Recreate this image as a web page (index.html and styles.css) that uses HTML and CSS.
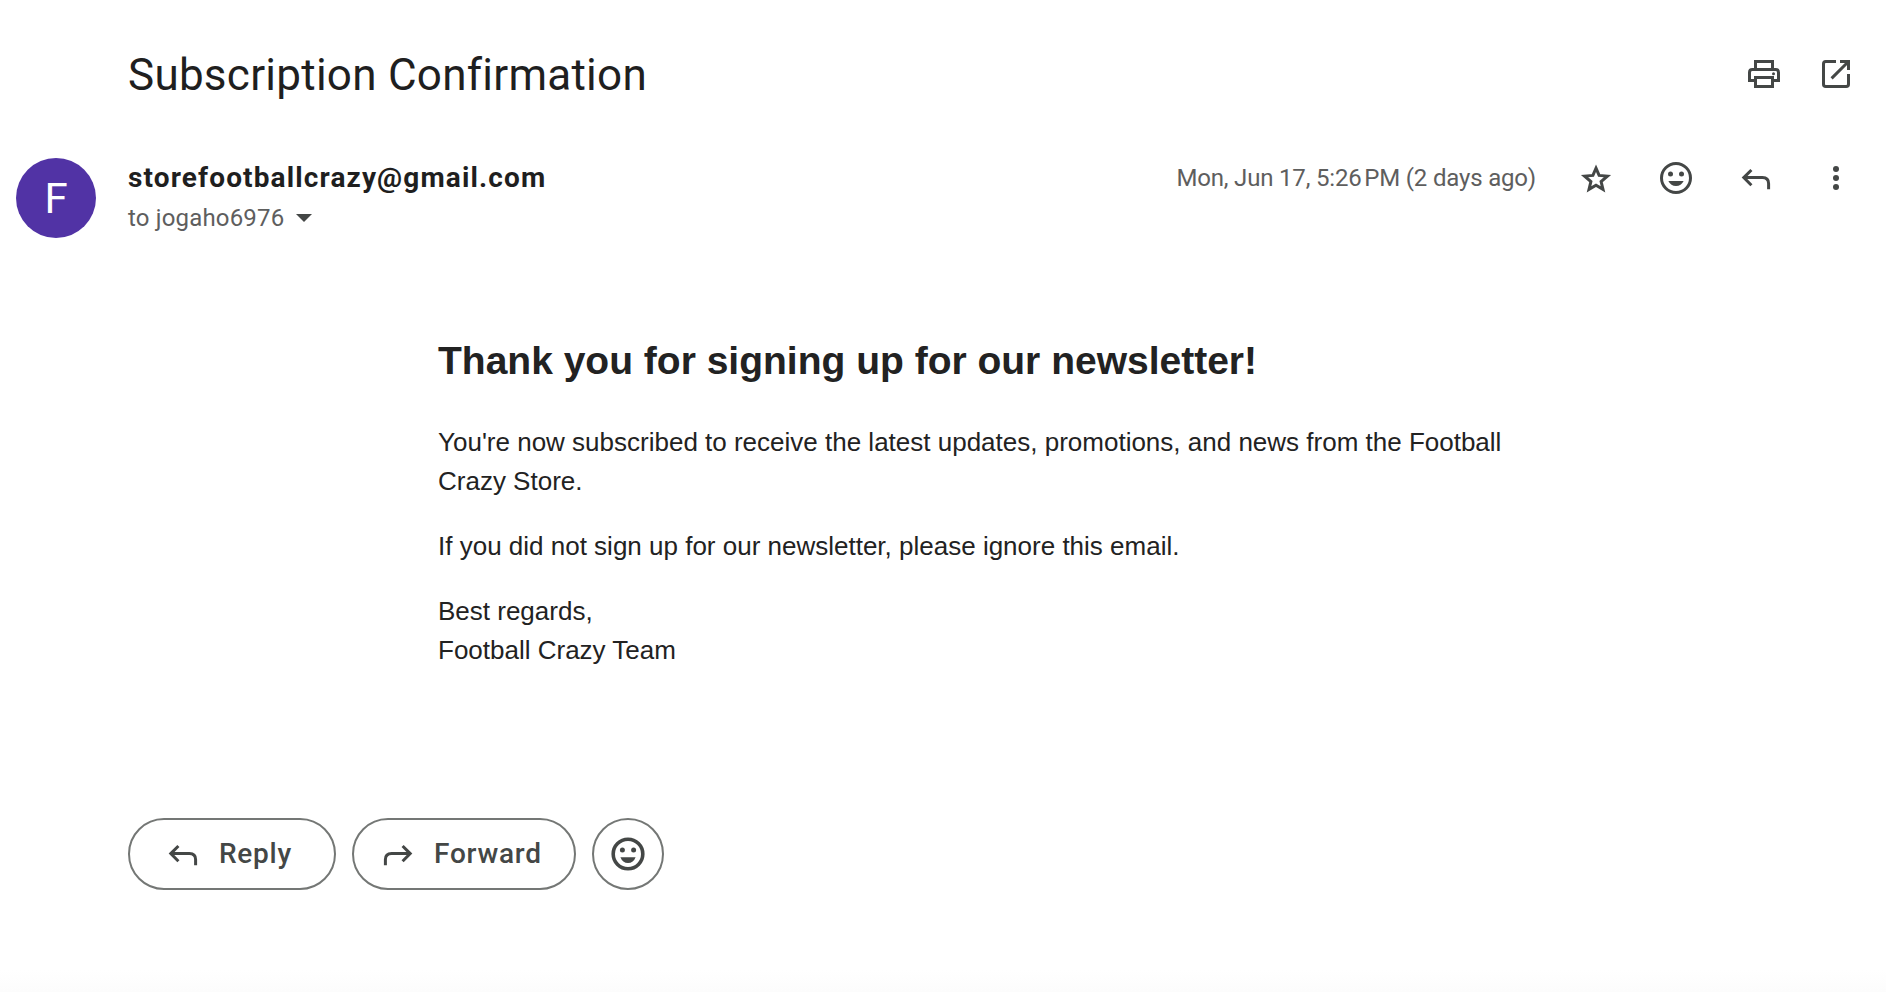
FILE: index.html
```html
<!DOCTYPE html>
<html lang="en">
<head>
<meta charset="utf-8">
<title>Subscription Confirmation</title>
<link rel="stylesheet" href="styles.css">
</head>
<body>
<svg width="0" height="0" class="defs">
  <symbol id="reply" viewBox="0 0 20 20"><path d="M7.7 6 3.9 9.8 7.7 13.6M4 9.8H13.2Q16.3 9.8 16.3 12.8V15.6" fill="none" stroke="currentColor" stroke-width="1.5"/></symbol>
  <symbol id="smile" viewBox="0 0 20 20"><circle cx="10" cy="10" r="7.25" fill="none" stroke="currentColor" stroke-width="1.5"/><circle cx="7.25" cy="8" r="1.25"/><circle cx="12.75" cy="8" r="1.25"/><path d="M6.2 11.5H13.8Q12.6 14 10 14T6.2 11.5Z"/></symbol>
</svg>
<main class="mail">
  <header class="subject-row">
    <h1 class="subject">Subscription Confirmation</h1>
    <div class="subject-actions">
      <svg class="icon" viewBox="0 0 20 20"><g fill="none" stroke="currentColor" stroke-width="1.5"><path d="M5.75 7V3.75H14.25V7M5.5 13.25H2.75V9.2Q2.75 7.75 4.2 7.75H15.8Q17.25 7.75 17.25 9.2V13.25H14.5"/><path d="M5.75 11.75H14.25V16.25H5.75Z"/></g><circle cx="14.75" cy="9.9" r=".75"/></svg>
      <svg class="icon" viewBox="0 0 20 20"><path d="M10 3.75H4.9Q3.75 3.75 3.75 4.9V15.1Q3.75 16.25 4.9 16.25H15.1Q16.25 16.25 16.25 15.1V10M12 3.75H16.25V8M16 4 7.8 12.2" fill="none" stroke="currentColor" stroke-width="1.5"/></svg>
    </div>
  </header>
  <section class="sender-row">
    <div class="avatar">F</div>
    <div class="sender">
      <div class="address">storefootballcrazy@gmail.com</div>
      <div class="recipient"><span class="to">to jogaho6976</span><span class="caret"></span></div>
    </div>
    <div class="meta">
      <span class="date">Mon, Jun 17, <span class="time">5:26 PM</span> (2 days ago)</span>
      <svg class="icon" viewBox="0 0 20 20"><path d="M10 5.1 11.55 8.7 15.7 9.05 12.55 11.75 13.5 15.7 10 13.6 6.5 15.7 7.45 11.75 4.3 9.05 8.45 8.7Z" fill="none" stroke="currentColor" stroke-width="1.5"/></svg>
      <svg class="icon"><use href="#smile"/></svg>
      <svg class="icon"><use href="#reply"/></svg>
      <svg class="icon" viewBox="0 0 20 20"><circle cx="10" cy="5.5" r="1.5"/><circle cx="10" cy="10" r="1.5"/><circle cx="10" cy="14.5" r="1.5"/></svg>
    </div>
  </section>
  <article class="body">
    <h2 class="heading">Thank you for signing up for our newsletter!</h2>
    <p class="para">You're now subscribed to receive the latest updates, promotions, and news from the Football Crazy Store.</p>
    <p class="para">If you did not sign up for our newsletter, please ignore this email.</p>
    <p class="para">Best regards,<br>Football Crazy Team</p>
  </article>
  <div class="actions">
    <button class="btn btn-reply"><svg class="icon"><use href="#reply"/></svg><span class="label">Reply</span></button>
    <button class="btn btn-forward"><svg class="icon flip"><use href="#reply"/></svg><span class="label">Forward</span></button>
    <button class="btn btn-emoji"><svg class="icon" viewBox="0 0 20 20"><circle cx="10" cy="10" r="7.4" fill="none" stroke="currentColor" stroke-width="1.8"/><circle cx="7.2" cy="8" r="1.25"/><circle cx="12.8" cy="8" r="1.25"/><path d="M6.2 11.6H13.8Q12.7 14.5 10 14.5T6.2 11.6Z"/></svg></button>
  </div>
  <div class="fade"></div>
</main>
</body>
</html>
```
FILE: styles.css
```css
* { box-sizing: border-box; }
body { margin: 0; background: #fff; color: #1f1f1f; font-family: Roboto, "Liberation Sans", sans-serif; }
.defs { display: block; }
.mail { height: 992px; display: flex; flex-direction: column; overflow: hidden; }
.icon { width: 40px; height: 40px; flex: none; display: block; color: #444746; fill: #444746; }
.subject-row { height: 148px; padding: 0 30px 0 128px; display: flex; justify-content: space-between; align-items: center; }
.subject { margin: 0; padding-top: 2px; font-size: 44px; line-height: 56px; font-weight: 400; letter-spacing: 0.26px; white-space: nowrap; }
.subject-actions { display: flex; gap: 32px; }
.sender-row { height: 96px; padding: 10px 30px 0 16px; display: flex; align-items: flex-start; }
.avatar { width: 80px; height: 80px; margin-right: 32px; border-radius: 50%; background: #5133a5; color: #fff; font-size: 42px; line-height: 81px; text-align: center; }
.sender { flex: 1; }
.address { font-size: 28px; line-height: 40px; font-weight: 700; letter-spacing: 1.13px; }
.recipient { display: flex; align-items: center; gap: 12px; height: 40px; color: #5e5e5e; font-size: 24px; letter-spacing: 0.17px; }
.caret { border: 8px solid transparent; border-top-color: #444746; border-bottom: 0; }
.meta { display: flex; align-items: center; gap: 40px; }
.date { color: #5e5e5e; font-size: 24px; letter-spacing: -0.18px; white-space: nowrap; }
.time { word-spacing: -3px; }
.body { width: 1070px; margin: 88px 0 0 438px; color: #222; font: 26px/39px "Liberation Sans", Arial, sans-serif; }
.heading { margin: 0 0 33px; font-size: 39px; line-height: 58px; font-weight: 700; }
.para { margin: 0 0 26px; }
.actions { display: flex; gap: 16px; margin: 122px 0 0 128px; }
.btn { height: 72px; padding: 0; display: flex; align-items: center; border: 2px solid #747775; border-radius: 36px; background: #fff; color: #444746; font: 500 28px Roboto, sans-serif; }
.btn-reply { width: 208px; padding-left: 33px; gap: 16px; }
.btn-forward { width: 224px; padding-left: 24px; gap: 16px; }
.btn-emoji { width: 72px; justify-content: center; }
.label { padding-bottom: 2px; letter-spacing: 0.75px; }
.flip { transform: scaleX(-1); }
.fade { height: 22px; margin-top: auto; background: linear-gradient(#fff, #fcfcfc); }
```
